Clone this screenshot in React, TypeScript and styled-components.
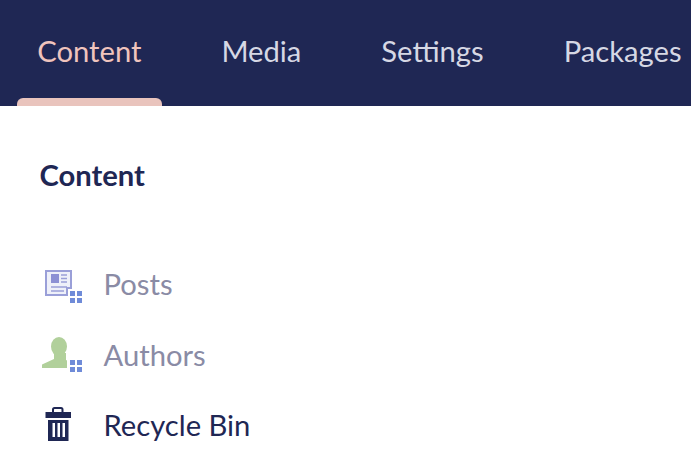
import React from 'react'
import styled, { createGlobalStyle } from 'styled-components'

const GlobalStyle = createGlobalStyle`
    html, body {
        margin: 0;
        padding: 0;
        background: #fff;
        overflow: hidden;
    }
    body {
        font-family: Lato, "Open Sans", sans-serif;
    }
`

const Page = styled.div`
    width: 691px;
    height: 474px;
    overflow: hidden;
`

const TopBar = styled.nav`
    display: flex;
    height: 106px;
    padding-left: 17px;
    gap: 39.5px;
    background: #1f2754;
    white-space: nowrap;
`

const Tab = styled.a<{ $active?: boolean }>`
    position: relative;
    padding: 0 20.25px;
    line-height: 101px;
    font-size: 29.2px;
    color: ${({ $active }) => ($active ? '#f0c4bd' : '#d6d8e4')};

    &::after {
        content: '';
        display: ${({ $active }) => ($active ? 'block' : 'none')};
        position: absolute;
        left: 0;
        right: 0;
        bottom: 0;
        height: 8px;
        border-radius: 6px 6px 0 0;
        background: #e9c4bd;
    }
`

const Sidebar = styled.aside`
    padding: 52px 40px 0;
`

const Heading = styled.h3`
    margin: 0 0 71.5px -0.5px;
    font-size: 29.2px;
    line-height: 34px;
    font-weight: 700;
    color: #1f2754;
`

const Menu = styled.ul`
    display: flex;
    flex-direction: column;
    gap: 30.5px;
    margin: 0;
    padding: 0;
    list-style: none;
`

const Item = styled.li<{ $muted?: boolean }>`
    display: flex;
    align-items: center;
    gap: 21.5px;
    height: 40px;
    font-size: 29.2px;
    color: ${({ $muted }) => ($muted ? '#8a8ba5' : '#1f2754')};
`

const Icon = styled.svg`
    flex: none;
    width: 42px;
    height: 42px;
`

const GridDots = ({ y }: { y: number }) => (
    <g fill="#6f8bd8">
        <rect x="30" y={y} width="5" height="5" />
        <rect x="37" y={y} width="5" height="5" />
        <rect x="30" y={y + 7} width="5" height="5" />
        <rect x="37" y={y + 7} width="5" height="5" />
    </g>
)

const PostsIcon = () => (
    <Icon viewBox="0 0 42 42">
        <path d="M6 8h25v17h-4v7H6z" fill="#eef0f9" stroke="#9a9fd8" strokeWidth="2" />
        <rect x="11" y="11" width="8" height="9" fill="#8c90d4" />
        <path
            d="M21 12h6M21 15.500h6M21 19h6M11 24h16M11 28h13"
            stroke="#9a9fd8"
            strokeWidth="1.600"
            fill="none"
        />
        <GridDots y={28} />
    </Icon>
)

const AuthorsIcon = () => (
    <Icon viewBox="0 0 42 42">
        <ellipse cx="19" cy="13.500" rx="8" ry="9.500" fill="#b1d09b" />
        <path d="M2 35v-3.500L14 26V20h12v7l1 .5V35z" fill="#b1d09b" />
        <GridDots y={27} />
    </Icon>
)

const BinIcon = () => (
    <Icon viewBox="0 0 42 42">
        <path
            d="M13 8V5.500C13 4.500 13.700 4 14.500 4h6.500c.8 0 1.500.5 1.500 1.500V8"
            fill="none"
            stroke="#1f2754"
            strokeWidth="2"
        />
        <path d="M5.500 8h25.500v6H5.500z" fill="#1f2754" />
        <path
            fillRule="evenodd"
            d="M8 16h20.500v21H8zM12.500 19v14h2.500V19zM17.500 19v14h2.500V19zM22.500 19v14h2.500V19z"
            fill="#1f2754"
        />
    </Icon>
)

const App: React.FunctionComponent = () => (
    <Page>
        <GlobalStyle />
        <TopBar>
            <Tab $active>Content</Tab>
            <Tab>Media</Tab>
            <Tab>Settings</Tab>
            <Tab>Packages</Tab>
        </TopBar>
        <Sidebar>
            <Heading>Content</Heading>
            <Menu>
                <Item $muted>
                    <PostsIcon />
                    Posts
                </Item>
                <Item $muted>
                    <AuthorsIcon />
                    Authors
                </Item>
                <Item>
                    <BinIcon />
                    Recycle Bin
                </Item>
            </Menu>
        </Sidebar>
    </Page>
)

export default App
